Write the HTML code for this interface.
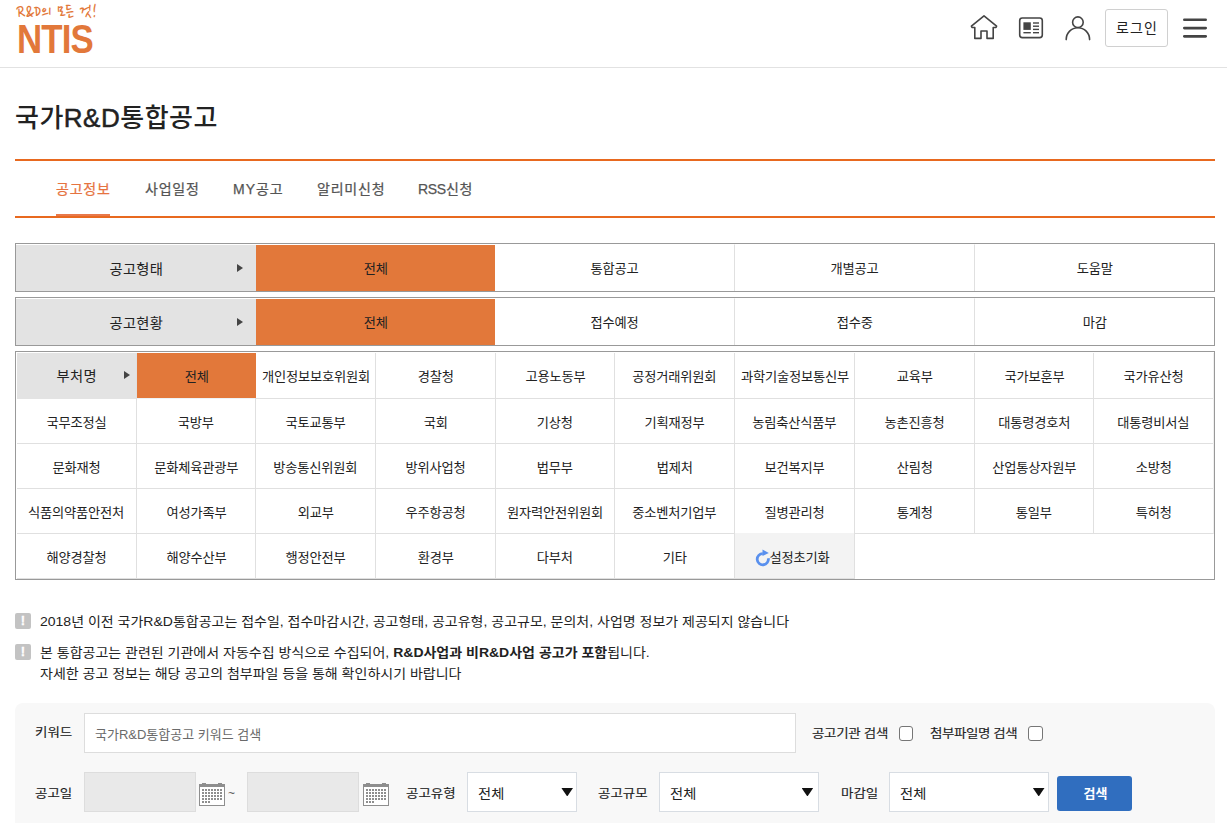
<!DOCTYPE html>
<html lang="ko">
<head>
<meta charset="utf-8">
<title>국가R&amp;D통합공고</title>
<style>
*{box-sizing:border-box;margin:0;padding:0}
html,body{width:1227px;height:823px;overflow:hidden;background:#fff}
body{font-family:"Liberation Sans","Noto Sans CJK KR","NanumGothic",sans-serif;color:#222;font-size:13px;position:relative}
.abs{position:absolute}
/* header */
#hdr{position:absolute;left:0;top:0;width:1227px;height:68px;border-bottom:1px solid #e2e2e2;background:#fff}
#logo{position:absolute;left:17px;top:17px;font-weight:bold;color:#e2783a;font-size:41px;line-height:44px;letter-spacing:-1px;transform:scaleX(.85);transform-origin:left center;white-space:nowrap}
#login{position:absolute;left:1105px;top:9px;width:63px;height:38px;border:1px solid #d0d0d0;border-radius:3px;font-size:14px;line-height:36px;text-align:center;color:#222;background:#fff;letter-spacing:1.2px;text-indent:1px}
/* title */
#title{position:absolute;left:15px;top:98px;font-size:26px;font-weight:500;line-height:40px;color:#222;white-space:nowrap;letter-spacing:.5px}
#title span{-webkit-text-stroke:.5px #222}
#line1{position:absolute;left:15px;top:159px;width:1200px;height:2px;background:#e8691f}
#line2{position:absolute;left:15px;top:216px;width:1200px;height:2px;background:#e8691f}
.tab{position:absolute;top:177px;font-size:14px;font-weight:400;line-height:24px;color:#555;white-space:nowrap;letter-spacing:.8px;-webkit-text-stroke:.25px #555}
.tab.on{color:#e6733f;-webkit-text-stroke:.25px #e6733f}
#tabbar{position:absolute;left:56px;top:214px;width:54px;height:2px;background:#e8794b}
/* filters */
.frow{position:absolute;left:15px;width:1200px;height:49px;border:1px solid #999;background:#fff}
.frow>div{position:absolute;top:0;height:47px;line-height:47px;text-align:center;font-size:14px;color:#222;white-space:nowrap;border-top:1px solid #fff}
.frow .lab{background:#e3e3e3;line-height:49px}
.frow .c{border-right:1px solid #e0e0e0}
.frow .on{background:#e2783a;border-right:none}
.frow .last{border-right:none}
.t{display:inline-block;font-size:13px;transform:scaleX(1.02);letter-spacing:-.2px}
.tl{font-size:14px;letter-spacing:.3px}
.arr{position:absolute;width:0;height:0;border-left:6px solid #444;border-top:4px solid transparent;border-bottom:4px solid transparent}
/* dept */
#dept{position:absolute;left:15px;top:351px;width:1200px;height:229px;border:1px solid #999;background:#fff}
#dept div.c{position:absolute;height:46px;line-height:46px;text-align:center;font-size:14px;color:#222;border-right:1px solid #e0e0e0;border-bottom:1px solid #e0e0e0;white-space:nowrap}
#dept div.lab{background:#e3e3e3;border-bottom-color:#e3e3e3}
#dept div.on{background:#e2783a;border-right:none;border-bottom:1px solid #eef3f6}
#dept div.rst{background:#f3f3f3}
#dept div.nr{border-right-color:#f0f0f0}
/* notes */
.note{position:absolute;left:40px;font-size:13px;line-height:21px;color:#222;white-space:nowrap;transform:scaleX(1.077);transform-origin:left center}
.nico{position:absolute;left:15px;width:16px;height:16px;background:#c3c3c3;border-radius:2px;color:#fff;font-weight:bold;font-size:13px;line-height:16px;text-align:center;-webkit-text-stroke:.3px #fff}
/* search */
#sbox{position:absolute;left:15px;top:703px;width:1200px;height:140px;background:#f8f8f8;border-radius:8px}
.sl{position:absolute;font-size:12.5px;line-height:20px;color:#222;white-space:nowrap;-webkit-text-stroke:.12px #222;transform:scaleX(1.08);transform-origin:left center}
.inp{position:absolute;background:#fff;border:1px solid #ddd}
.sel{position:absolute;background:#fff;border:1px solid #d8dde3;height:40px;font-size:14px;line-height:40px;padding-left:10px;color:#222}
.sel:after{content:"";position:absolute;right:3px;top:15px;width:11.6px;height:8.4px;background:#111;clip-path:polygon(0 0,100% 0,50% 100%)}
.cb{position:absolute;width:15px;height:15px;border:1px solid #767676;border-radius:3px;background:#fff}
.dinp{position:absolute;width:112px;height:40px;background:#e9e9e9;border:1px solid #ddd}
#sbtn{position:absolute;left:1042px;top:73px;width:75px;height:35px;background:#306ebf;border-radius:3px;color:#fff;font-weight:bold;font-size:13px;line-height:36px;text-align:center;text-indent:2px}
.s2:after{right:4.8px}
.s3:after{right:3.5px}
.st{display:inline-block;font-size:13px;transform:scaleX(1.1);transform-origin:left center}
</style>
</head>
<body>
<div id="hdr">
  <svg width="120" height="26" viewBox="0 0 120 26" style="position:absolute;left:0;top:0"><text x="16.5" y="19" textLength="81" lengthAdjust="spacingAndGlyphs" font-family="'Nanum Pen','Nanum Brush Script','Liberation Sans','NanumGothic',sans-serif" font-size="20" fill="#e2783a" transform="rotate(-1 16.5 19)">R&amp;D의 모든 것!</text></svg>
  <div id="logo">NTIS</div>
  <svg width="1227" height="67" viewBox="0 0 1227 67" style="position:absolute;left:0;top:0">
    <g fill="none" stroke="#444" stroke-width="1.6" stroke-linejoin="round" stroke-linecap="round">
      <path d="M984 15.9L996.6 26.2L996 27.5L993.2 27.5L993.2 38.4L987 38.4L987 31L981 31L981 38.4L974.8 38.4L974.8 27.5L972 27.5L971.4 26.2Z"/>
      <rect x="1019.7" y="18" width="22.6" height="19.6" rx="2.6"/>
      <circle cx="1077.9" cy="22.2" r="5.3"/>
      <path d="M1066.2 39.6A11.7 11.9 0 0 1 1089.6 39.6"/>
    </g>
    <g fill="#444">
      <rect x="1023.4" y="22.3" width="7.4" height="7.6"/>
      <rect x="1033" y="22.3" width="6" height="1.4"/>
      <rect x="1033" y="25.5" width="6" height="1.4"/>
      <rect x="1033" y="28.7" width="6" height="1.4"/>
      <rect x="1023.4" y="32" width="7.4" height="1.4"/>
      <rect x="1033" y="32" width="6" height="1.4"/>
      <rect x="1183" y="18.4" width="24" height="2.7" rx="1.35"/>
      <rect x="1183" y="26.7" width="24" height="2.7" rx="1.35"/>
      <rect x="1183" y="35" width="24" height="2.7" rx="1.35"/>
    </g>
  </svg>
  <div id="login">로그인</div>
</div>
<div id="title">국가<span>R&amp;D</span>통합공고</div>
<div id="line1"></div>
<div class="tab on" style="left:56px">공고정보</div>
<div class="tab" style="left:145px">사업일정</div>
<div class="tab" style="left:233px"><span style="letter-spacing:1px">MY</span>공고</div>
<div class="tab" style="left:317px">알리미신청</div>
<div class="tab" style="left:418px"><span style="letter-spacing:-.3px">RSS</span>신청</div>
<div id="line2"></div>
<div id="tabbar"></div>
<div class="frow" style="top:243px">
  <div class="lab" style="left:0;width:240px"><span class="t tl">공고형태</span><i class="arr" style="left:221px;top:19px"></i></div>
  <div class="c on" style="left:240px;width:239px"><span class="t">전체</span></div>
  <div class="c " style="left:479px;width:240px"><span class="t">통합공고</span></div>
  <div class="c " style="left:719px;width:240px"><span class="t">개별공고</span></div>
  <div class="c last" style="left:959px;width:239px"><span class="t">도움말</span></div>
</div>
<div class="frow" style="top:297px">
  <div class="lab" style="left:0;width:240px"><span class="t tl">공고현황</span><i class="arr" style="left:221px;top:19px"></i></div>
  <div class="c on" style="left:240px;width:239px"><span class="t">전체</span></div>
  <div class="c " style="left:479px;width:240px"><span class="t">접수예정</span></div>
  <div class="c " style="left:719px;width:240px"><span class="t">접수중</span></div>
  <div class="c last" style="left:959px;width:239px"><span class="t">마감</span></div>
</div>
<div id="dept">
  <div class="c lab" style="left:1px;top:1px;width:120px"><span class="t tl">부처명</span><i class="arr" style="left:107px;top:18px;border-left-width:6px"></i></div>
  <div class="c on" style="left:121px;top:1px;width:119px"><span class="t">전체</span></div>
  <div class="c" style="left:240px;top:1px;width:120px"><span class="t">개인정보보호위원회</span></div>
  <div class="c" style="left:360px;top:1px;width:120px"><span class="t">경찰청</span></div>
  <div class="c" style="left:480px;top:1px;width:119px"><span class="t">고용노동부</span></div>
  <div class="c" style="left:599px;top:1px;width:120px"><span class="t">공정거래위원회</span></div>
  <div class="c" style="left:719px;top:1px;width:120px"><span class="t">과학기술정보통신부</span></div>
  <div class="c" style="left:839px;top:1px;width:120px"><span class="t">교육부</span></div>
  <div class="c" style="left:959px;top:1px;width:119px"><span class="t">국가보훈부</span></div>
  <div class="c nr" style="left:1078px;top:1px;width:120px"><span class="t">국가유산청</span></div>
  <div class="c" style="left:1px;top:46px;width:120px;line-height:48px"><span class="t">국무조정실</span></div>
  <div class="c" style="left:121px;top:46px;width:119px;line-height:48px"><span class="t">국방부</span></div>
  <div class="c" style="left:240px;top:46px;width:120px;line-height:48px"><span class="t">국토교통부</span></div>
  <div class="c" style="left:360px;top:46px;width:120px;line-height:48px"><span class="t">국회</span></div>
  <div class="c" style="left:480px;top:46px;width:119px;line-height:48px"><span class="t">기상청</span></div>
  <div class="c" style="left:599px;top:46px;width:120px;line-height:48px"><span class="t">기획재정부</span></div>
  <div class="c" style="left:719px;top:46px;width:120px;line-height:48px"><span class="t">농림축산식품부</span></div>
  <div class="c" style="left:839px;top:46px;width:120px;line-height:48px"><span class="t">농촌진흥청</span></div>
  <div class="c" style="left:959px;top:46px;width:119px;line-height:48px"><span class="t">대통령경호처</span></div>
  <div class="c nr" style="left:1078px;top:46px;width:120px;line-height:48px"><span class="t">대통령비서실</span></div>
  <div class="c" style="left:1px;top:91px;width:120px;line-height:48px"><span class="t">문화재청</span></div>
  <div class="c" style="left:121px;top:91px;width:119px;line-height:48px"><span class="t">문화체육관광부</span></div>
  <div class="c" style="left:240px;top:91px;width:120px;line-height:48px"><span class="t">방송통신위원회</span></div>
  <div class="c" style="left:360px;top:91px;width:120px;line-height:48px"><span class="t">방위사업청</span></div>
  <div class="c" style="left:480px;top:91px;width:119px;line-height:48px"><span class="t">법무부</span></div>
  <div class="c" style="left:599px;top:91px;width:120px;line-height:48px"><span class="t">법제처</span></div>
  <div class="c" style="left:719px;top:91px;width:120px;line-height:48px"><span class="t">보건복지부</span></div>
  <div class="c" style="left:839px;top:91px;width:120px;line-height:48px"><span class="t">산림청</span></div>
  <div class="c" style="left:959px;top:91px;width:119px;line-height:48px"><span class="t">산업통상자원부</span></div>
  <div class="c nr" style="left:1078px;top:91px;width:120px;line-height:48px"><span class="t">소방청</span></div>
  <div class="c" style="left:1px;top:136px;width:120px;line-height:48px"><span class="t">식품의약품안전처</span></div>
  <div class="c" style="left:121px;top:136px;width:119px;line-height:48px"><span class="t">여성가족부</span></div>
  <div class="c" style="left:240px;top:136px;width:120px;line-height:48px"><span class="t">외교부</span></div>
  <div class="c" style="left:360px;top:136px;width:120px;line-height:48px"><span class="t">우주항공청</span></div>
  <div class="c" style="left:480px;top:136px;width:119px;line-height:48px"><span class="t">원자력안전위원회</span></div>
  <div class="c" style="left:599px;top:136px;width:120px;line-height:48px"><span class="t">중소벤처기업부</span></div>
  <div class="c" style="left:719px;top:136px;width:120px;line-height:48px"><span class="t">질병관리청</span></div>
  <div class="c" style="left:839px;top:136px;width:120px;line-height:48px"><span class="t">통계청</span></div>
  <div class="c" style="left:959px;top:136px;width:119px;line-height:48px"><span class="t">통일부</span></div>
  <div class="c nr" style="left:1078px;top:136px;width:120px;line-height:48px"><span class="t">특허청</span></div>
  <div class="c" style="left:1px;top:181px;width:120px;line-height:48px"><span class="t">해양경찰청</span></div>
  <div class="c" style="left:121px;top:181px;width:119px;line-height:48px"><span class="t">해양수산부</span></div>
  <div class="c" style="left:240px;top:181px;width:120px;line-height:48px"><span class="t">행정안전부</span></div>
  <div class="c" style="left:360px;top:181px;width:120px;line-height:48px"><span class="t">환경부</span></div>
  <div class="c" style="left:480px;top:181px;width:119px;line-height:48px"><span class="t">다부처</span></div>
  <div class="c" style="left:599px;top:181px;width:120px;line-height:48px"><span class="t">기타</span></div>
  <div class="c rst" style="left:719px;top:181px;width:120px;line-height:48px"><svg width="20" height="20" viewBox="0 0 20 20" style="position:absolute;left:19px;top:15px"><path d="M8.8 5.6A5.6 5.6 0 1 0 14.3 10.2" fill="none" stroke="#5990ee" stroke-width="2.8"/><path d="M8.5 1.6L14.8 4.9L8.5 8.1Z" fill="#5990ee"/></svg><span class="t" style="margin-left:10px">설정초기화</span></div>
</div>
<div class="nico" style="top:613px">!</div>
<div class="note" style="top:610.5px">2018년 이전 국가R&amp;D통합공고는 접수일, 접수마감시간, 공고형태, 공고유형, 공고규모, 문의처, 사업명 정보가 제공되지 않습니다</div>
<div class="nico" style="top:644px">!</div>
<div class="note" style="top:641.5px">본 통합공고는 관련된 기관에서 자동수집 방식으로 수집되어, <b>R&amp;D사업과 비R&amp;D사업 공고가 포함</b>됩니다.</div>
<div class="note" style="top:662.5px">자세한 공고 정보는 해당 공고의 첨부파일 등을 통해 확인하시기 바랍니다</div>
<div id="sbox">
  <div class="sl" style="left:20px;top:20px">키워드</div>
  <div class="inp" style="left:69px;top:10px;width:712px;height:40px"><span style="position:absolute;left:10px;top:11px;font-size:13px;line-height:20px;color:#6a6a6a;white-space:nowrap">국가R&amp;D통합공고 키워드 검색</span></div>
  <div class="sl" style="left:797px;top:21px;letter-spacing:-.3px">공고기관 검색</div>
  <div class="cb" style="left:883.5px;top:23px;width:14.5px"></div>
  <div class="sl" style="left:915px;top:21px;letter-spacing:-.4px">첨부파일명 검색</div>
  <div class="cb" style="left:1013px;top:23px"></div>
  <div class="sl" style="left:20px;top:81px">공고일</div>
  <div class="dinp" style="left:69px;top:69px"></div>
  <svg width="26" height="23" viewBox="0 0 26 23" style="position:absolute;left:184px;top:80px" shape-rendering="crispEdges"><rect x="3" y="0" width="4" height="1" fill="#8e8e8e"/><rect x="19" y="0" width="4" height="1" fill="#8e8e8e"/><rect x="0" y="1" width="26" height="22" fill="#8e8e8e"/><rect x="1" y="4" width="24" height="18" fill="#fff"/><path d="M3 6h2v2h-2zM6 6h2v2h-2zM9 6h2v2h-2zM12 6h2v2h-2zM15 6h2v2h-2zM18 6h2v2h-2zM21 6h2v2h-2zM3 9h2v2h-2zM6 9h2v2h-2zM9 9h2v2h-2zM12 9h2v2h-2zM15 9h2v2h-2zM18 9h2v2h-2zM21 9h2v2h-2zM3 12h2v2h-2zM6 12h2v2h-2zM9 12h2v2h-2zM12 12h2v2h-2zM15 12h2v2h-2zM18 12h2v2h-2zM21 12h2v2h-2zM3 15h2v2h-2zM6 15h2v2h-2zM9 15h2v2h-2zM12 15h2v2h-2zM15 15h2v2h-2zM18 15h2v2h-2zM21 15h2v2h-2zM3 18h2v2h-2zM6 18h2v2h-2zM9 18h2v2h-2z" fill="#8e8e8e"/></svg>
  <div class="sl" style="left:213px;top:80px;font-size:11px;color:#444;-webkit-text-stroke:0">~</div>
  <div class="dinp" style="left:232px;top:69px"></div>
  <svg width="26" height="23" viewBox="0 0 26 23" style="position:absolute;left:348px;top:80px" shape-rendering="crispEdges"><rect x="3" y="0" width="4" height="1" fill="#8e8e8e"/><rect x="19" y="0" width="4" height="1" fill="#8e8e8e"/><rect x="0" y="1" width="26" height="22" fill="#8e8e8e"/><rect x="1" y="4" width="24" height="18" fill="#fff"/><path d="M3 6h2v2h-2zM6 6h2v2h-2zM9 6h2v2h-2zM12 6h2v2h-2zM15 6h2v2h-2zM18 6h2v2h-2zM21 6h2v2h-2zM3 9h2v2h-2zM6 9h2v2h-2zM9 9h2v2h-2zM12 9h2v2h-2zM15 9h2v2h-2zM18 9h2v2h-2zM21 9h2v2h-2zM3 12h2v2h-2zM6 12h2v2h-2zM9 12h2v2h-2zM12 12h2v2h-2zM15 12h2v2h-2zM18 12h2v2h-2zM21 12h2v2h-2zM3 15h2v2h-2zM6 15h2v2h-2zM9 15h2v2h-2zM12 15h2v2h-2zM15 15h2v2h-2zM18 15h2v2h-2zM21 15h2v2h-2zM3 18h2v2h-2zM6 18h2v2h-2zM9 18h2v2h-2z" fill="#8e8e8e"/></svg>
  <div class="sl" style="left:391px;top:81px">공고유형</div>
  <div class="sel" style="left:452px;top:69px;width:110px"><span class="st">전체</span></div>
  <div class="sl" style="left:583px;top:81px">공고규모</div>
  <div class="sel s2" style="left:644px;top:69px;width:160px"><span class="st">전체</span></div>
  <div class="sl" style="left:826px;top:81px">마감일</div>
  <div class="sel s3" style="left:874px;top:69px;width:160px"><span class="st">전체</span></div>
  <div id="sbtn">검색</div>
</div>
</body>
</html>
